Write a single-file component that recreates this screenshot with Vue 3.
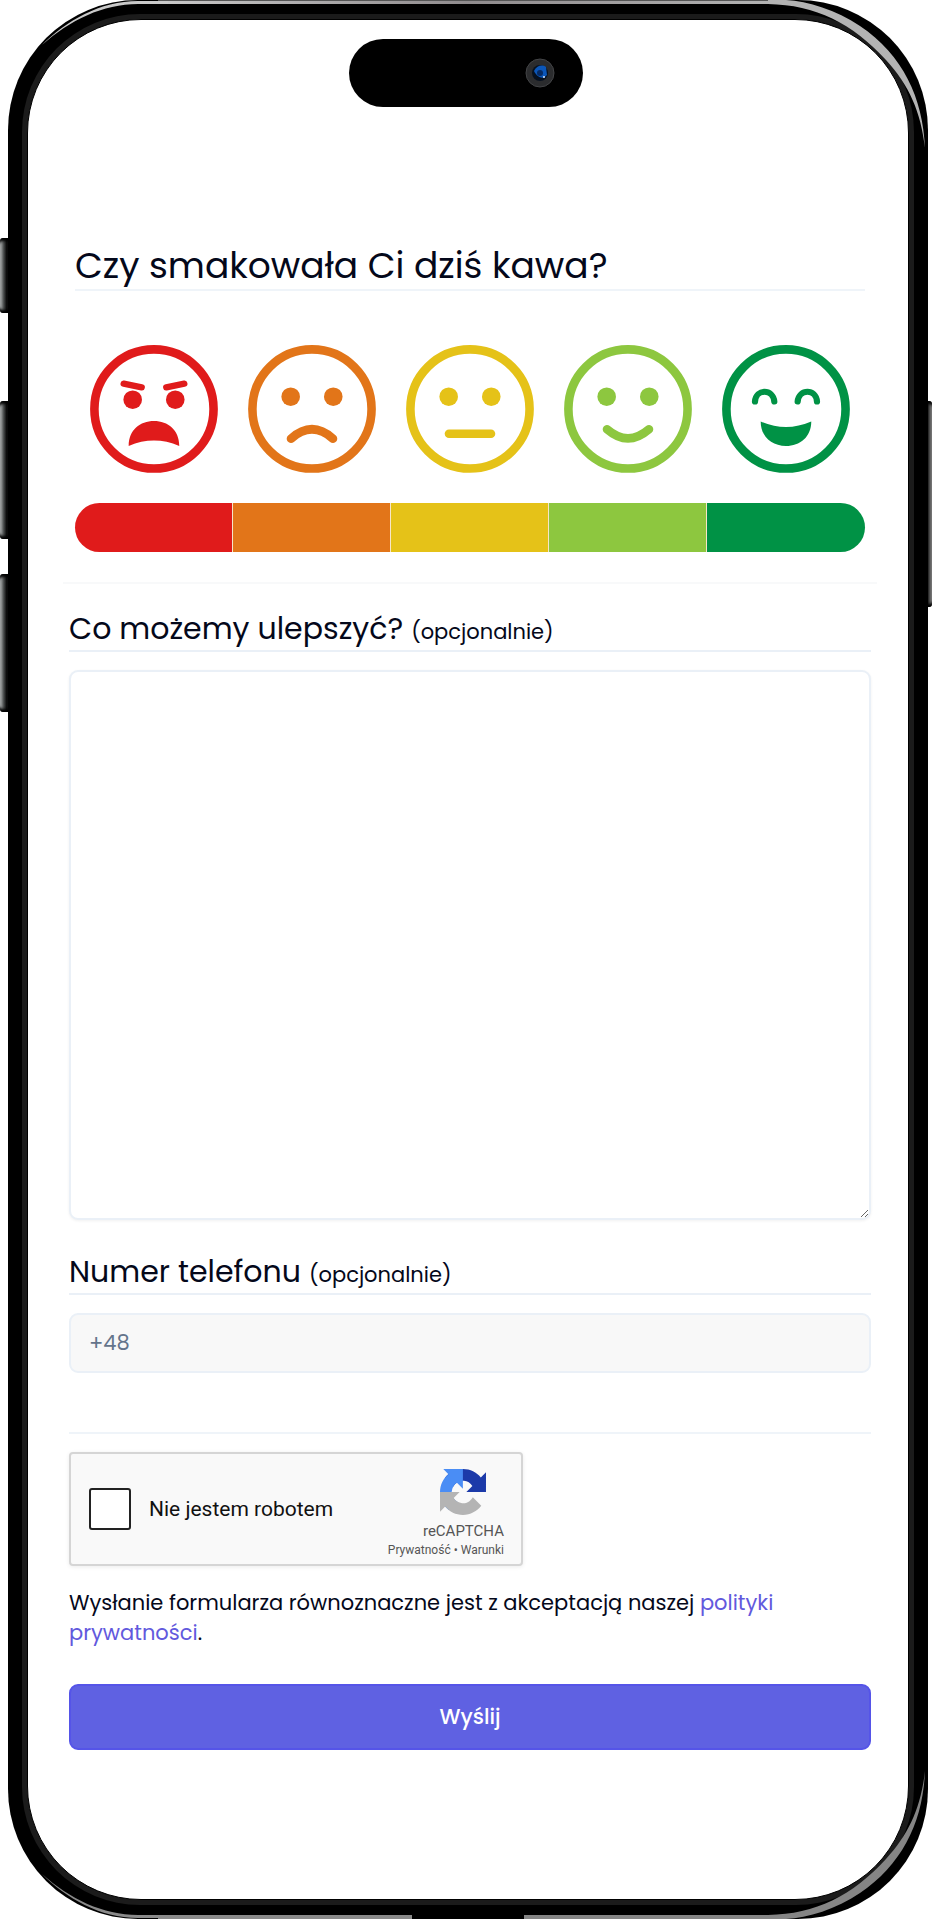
<script setup>
import { ref } from 'vue'

const rating = ref('')
const comment = ref('')
const phone = ref('')
const notRobot = ref(false)

const levels = [
  { id: 'terrible', label: 'Bardzo źle' },
  { id: 'bad', label: 'Źle' },
  { id: 'neutral', label: 'Średnio' },
  { id: 'good', label: 'Dobrze' },
  { id: 'great', label: 'Bardzo dobrze' },
]

const submit = () => {
  if (!notRobot.value) return
  comment.value = ''
  phone.value = ''
  rating.value = ''
}
</script>

<template>
  <div class="phone">
    <!-- przyciski boczne -->
    <span class="side-key side-key--action"></span>
    <span class="side-key side-key--up"></span>
    <span class="side-key side-key--down"></span>
    <span class="side-key side-key--power"></span>

    <!-- refleksy na obudowie -->
    <span class="edge edge--top"></span>
    <span class="edge edge--bottom"></span>
    <svg class="glare glare--tl" viewBox="0 0 160 160" width="160" height="160" aria-hidden="true">
      <path d="M34 45C58 21 92 1 130 1H160V4H130C95 4 62 20 34 45Z" fill="#c9c9c9" />
    </svg>
    <svg class="glare glare--tr" viewBox="0 0 160 160" width="160" height="160" aria-hidden="true">
      <path d="M0 0H18C40 1 68 10 92 26C135 55 155 98 157 148C153 112 141 85 118 60C84 23 48 5 0 4Z" fill="#b3b3b3" />
    </svg>
    <svg class="glare glare--bl" viewBox="0 0 160 160" width="160" height="160" aria-hidden="true">
      <path d="M34 115C58 139 92 159 130 159H160V156H130C95 156 62 140 34 115Z" fill="#8a8a8a" />
    </svg>
    <svg class="glare glare--br" viewBox="0 0 160 160" width="160" height="160" aria-hidden="true">
      <path d="M0 160H18C40 159 68 150 92 134C135 105 155 62 157 12C153 48 141 75 118 100C84 137 48 155 0 156Z" fill="#858585" />
    </svg>

    <div class="bezel">
      <main class="screen">
        <div class="island">
          <svg width="30" height="30" viewBox="0 0 30 30" aria-hidden="true">
            <circle cx="15" cy="15" r="14" fill="#2b2c2e" stroke="#434446" />
            <circle cx="15" cy="15" r="8" fill="#07111f" />
            <path d="M9 13C11 8 17 6 21 9L22 17C19 21 13 21 9 13Z" fill="#0b56b8" />
            <circle cx="15" cy="15" r="3" fill="#062a63" />
            <circle cx="19" cy="19" r="1" fill="#dceaff" />
          </svg>
        </div>

        <form class="form" @submit.prevent="submit">
          <fieldset class="rating">
            <legend class="rating__title">Czy smakowała Ci dziś kawa?</legend>
            <div class="rating__options">
              <label v-for="l in levels" :key="l.id" class="option" :class="`option--${l.id}`">
                <input v-model="rating" class="option__input" type="radio" name="rating" :value="l.id" :aria-label="l.label" />
                <svg class="option__face" viewBox="0 0 128 128" fill="none" stroke="currentColor" stroke-linecap="round" aria-hidden="true">
                  <circle cx="64" cy="64" r="59.6" stroke-width="8.6" />
                  <g v-if="l.id !== 'great'" fill="currentColor" stroke="none">
                    <circle cx="42.7" :cy="l.id === 'terrible' ? 54.7 : 51.7" r="9.3" />
                    <circle cx="85.3" :cy="l.id === 'terrible' ? 54.7 : 51.7" r="9.3" />
                  </g>
                  <template v-if="l.id === 'terrible'">
                    <path d="M33.7 38.7L51.7 42.3M94.3 38.7L76.3 42.3" stroke-width="6.4" />
                    <path d="M38.7 101C38.7 85 50 76 64 76S89.3 85 89.3 101Q64 90 38.7 101Z" fill="currentColor" stroke="none" />
                  </template>
                  <path v-else-if="l.id === 'bad'" d="M43 93.7Q64 75 85 93.7" stroke-width="8.6" />
                  <path v-else-if="l.id === 'neutral'" d="M43 88.7H85" stroke-width="8.6" />
                  <path v-else-if="l.id === 'good'" d="M43 84.3Q64 102.5 85 84.3" stroke-width="8.6" />
                  <template v-else>
                    <path d="M33 56.5C34 43.5 51 43.5 52.3 56.5M75.7 56.5C77 43.5 94 43.5 95 56.5" stroke-width="6.2" />
                    <path d="M38.7 76.5Q64 87.5 89.3 76.5C89.3 92 78 101 64 101S38.7 92 38.7 76.5Z" fill="currentColor" stroke="none" />
                  </template>
                </svg>
                <span class="option__bar"></span>
              </label>
            </div>
          </fieldset>

          <hr class="divider divider--wide" />

          <label class="label" for="comment">Co możemy ulepszyć? <small>(opcjonalnie)</small></label>
          <textarea id="comment" v-model="comment" class="field field--area"></textarea>

          <label class="label label--phone" for="phone">Numer telefonu <small>(opcjonalnie)</small></label>
          <input id="phone" v-model="phone" class="field field--phone" type="tel" placeholder="+48" />

          <hr class="divider" />

          <div class="captcha">
            <input id="robot" v-model="notRobot" class="captcha__box" type="checkbox" />
            <label class="captcha__label" for="robot">Nie jestem robotem</label>
            <div class="captcha__brand">
              <svg width="46" height="46" viewBox="0 0 64 64" aria-hidden="true">
                <path fill="#1c3aa9" d="M64 31.955l-.033-1.37V4.687l-7.16 7.16C50.948 4.674 42.033.093 32.05.093c-10.4 0-19.622 4.96-25.458 12.64l11.736 11.86a15.55 15.55 0 0 1 4.754-5.334c2.05-1.6 4.952-2.906 8.968-2.906.485 0 .86.057 1.135.163 4.976.393 9.288 3.14 11.828 7.124l-8.307 8.307L64 31.953" />
                <path fill="#4a8df5" d="M31.862.094l-1.37.033H4.594l7.16 7.16C4.58 13.147 0 22.06 0 32.046c0 10.4 4.96 19.622 12.64 25.458L24.5 45.768a15.55 15.55 0 0 1-5.334-4.754c-1.6-2.05-2.906-4.952-2.906-8.968 0-.485.057-.86.163-1.135.393-4.976 3.14-9.288 7.124-11.828l8.307 8.307L31.86.095" />
                <path fill="#b4b4b4" d="M.001 32.045l.033 1.37v25.898l7.16-7.16c5.86 7.173 14.774 11.754 24.76 11.754 10.4 0 19.622-4.96 25.458-12.64l-11.736-11.86a15.55 15.55 0 0 1-4.754 5.334c-2.05 1.6-4.952 2.906-8.968 2.906-.485 0-.86-.057-1.135-.163-4.976-.393-9.288-3.14-11.828-7.124l8.307-8.307c-10.522.04-22.4.066-27.295-.005" />
              </svg>
              <span class="captcha__name">reCAPTCHA</span>
              <span class="captcha__links"><a href="#">Prywatność</a> • <a href="#">Warunki</a></span>
            </div>
          </div>

          <p class="consent">
            Wysłanie formularza równoznaczne jest z akceptacją naszej
            <a href="#">polityki prywatności</a>.
          </p>

          <button class="submit" type="submit">Wyślij</button>
        </form>
      </main>
    </div>
  </div>
</template>

<style>
body {
  background: #fff;
}
</style>

<style scoped>
.phone {
  position: relative;
  margin: 0 4px 0 8px;
  padding: 14px;
  border-radius: 130px;
  background: #000;
  font-family: Poppins, Inter, "Open Sans", sans-serif;
  color: #04081a;
}

.bezel {
  padding: 5px;
  border-radius: 118px;
  background: #1b1b1b;
}

.screen {
  display: flow-root;
  padding-right: 4px;
  border: 1px solid #000;
  border-radius: 114px;
  background: #fff;
}

.side-key {
  position: absolute;
  left: -8px;
  width: 8px;
  height: 138px;
  border-radius: 3px 0 0 3px;
  background: linear-gradient(to right, #b5b8b8, #4b4e4e 45%, #0c0c0c 80%);
  box-shadow: inset 0 5px 3px -2px #000, inset 0 -5px 3px -2px #000;
}

.side-key--action { top: 238px; height: 75px; }
.side-key--up { top: 401px; }
.side-key--down { top: 574px; }

.side-key--power {
  top: 401px;
  right: -4px;
  left: auto;
  width: 4px;
  height: 206px;
  border-radius: 0 3px 3px 0;
  background: linear-gradient(to right, #222, #8a8a8a);
}

.edge {
  position: absolute;
  right: 150px;
  left: 150px;
  height: 4px;
}

.edge--top {
  top: 0;
  border-top: 1px solid #555;
  box-sizing: border-box;
  background: linear-gradient(to right, #c9c9c9, #8f8b8d 50%, #b3b3b3);
}

.edge--bottom {
  bottom: 0;
  background: linear-gradient(to right, #8a8a8a 0 41%, #000 41% 59%, #858585 59%);
}

.glare { position: absolute; }
.glare--tl { top: 0; left: 0; }
.glare--tr { top: 0; right: 0; }
.glare--bl { bottom: 0; left: 0; }
.glare--br { right: 0; bottom: 0; }

.island {
  display: flex;
  align-items: center;
  justify-content: flex-end;
  box-sizing: border-box;
  width: 234px;
  height: 68px;
  margin: 19px auto 0;
  padding-right: 28px;
  border-radius: 34px;
  background: #000;
}

.form {
  display: flex;
  flex-direction: column;
  padding: 135px 33px 149px 41px;
}

.rating {
  min-width: 0;
  margin: 0 6px;
  padding: 0;
  border: 0;
}

.rating__title {
  box-sizing: border-box;
  width: 100%;
  padding: 0;
  border-bottom: 2px solid #eff4f9;
  font-size: 36px;
  line-height: 47px;
}

.rating__options {
  display: grid;
  grid-template-columns: repeat(5, 1fr);
  padding-top: 54px;
}

.option {
  display: flex;
  flex-direction: column;
  align-items: center;
  gap: 30px;
  cursor: pointer;
}

.option__input {
  position: absolute;
  opacity: 0;
}

.option__face {
  width: 81%;
  height: auto;
}

.option__input:focus-visible + .option__face {
  outline: 2px solid currentColor;
  outline-offset: 4px;
  border-radius: 50%;
}

.option__bar {
  align-self: stretch;
  box-sizing: border-box;
  height: 49px;
  border-right: 1px solid #f7e6c8;
  background: currentColor;
}

.option:first-child .option__bar { border-radius: 25px 0 0 25px; }
.option:last-child .option__bar { border-right: 0; border-radius: 0 25px 25px 0; }

.option--terrible { color: #e01b1b; }
.option--bad { color: #e27519; }
.option--neutral { color: #e5c218; }
.option--good { color: #8dc73f; }
.option--great { color: #009245; }

.divider {
  width: 100%;
  height: 2px;
  margin: 59px 0 18px;
  border: 0;
  background: #eff4f9;
}

.divider--wide {
  width: auto;
  margin: 30px -6px 25px;
  background: #f8f9fa;
}

.label {
  padding-bottom: 1px;
  border-bottom: 2px solid #eaf0f7;
  font-size: 30px;
  line-height: 40px;
}

.label small {
  font-size: 21px;
  line-height: 1;
}

.label--phone { margin-top: 32px; }

.field {
  box-sizing: border-box;
  width: 100%;
  margin: 18px 0 0;
  padding: 12px 18px;
  border: 2px solid #eaf0f7;
  border-radius: 9px;
  background: #fff;
  color: inherit;
  font: inherit;
  font-size: 21px;
  box-shadow: 0 1px 3px rgba(0, 0, 0, 0.06);
}

.field:focus {
  outline: none;
  border-color: #5f61e2;
}

.field::placeholder { color: #64748b; opacity: 1; }

.field--area {
  height: 550px;
  resize: vertical;
}

.field--phone {
  height: 60px;
  background: #f8f8f8;
  box-shadow: none;
}

.captcha {
  display: flex;
  align-items: center;
  box-sizing: border-box;
  width: 454px;
  max-width: 100%;
  height: 114px;
  padding: 0 17px 0 18px;
  border: 2px solid #d5d5d5;
  border-radius: 4px;
  background: #f9f9f9;
  box-shadow: 0 1px 4px rgba(0, 0, 0, 0.08);
  font-family: Roboto, sans-serif;
}

.captcha__box {
  appearance: none;
  flex: none;
  box-sizing: border-box;
  width: 42px;
  height: 42px;
  margin: 0;
  border: 2px solid #222;
  border-radius: 3px;
  background: #fff;
}

.captcha__box:checked { background: #4a8df5; }

.captcha__label {
  flex: 1;
  padding-left: 18px;
  color: #111;
  font-size: 21px;
}

.captcha__brand {
  display: flex;
  flex-direction: column;
  align-items: flex-end;
  padding-top: 10px;
  color: #555;
}

.captcha__brand svg { margin-right: 18px; }

.captcha__name {
  margin-top: 5px;
  font-size: 15px;
  line-height: 22px;
}

.captcha__links { font-size: 12px; line-height: 16px; }

.captcha__links a {
  color: inherit;
  text-decoration: none;
}

.consent {
  margin: 22px 0 36px;
  font-size: 21px;
  line-height: 30px;
}

.consent a {
  color: #6259dd;
  text-decoration: none;
}

.submit {
  height: 66px;
  border: 2px solid #5554e8;
  border-radius: 9px;
  background: #5f61e2;
  color: #fff;
  font: inherit;
  font-size: 21px;
  font-weight: 500;
  cursor: pointer;
}
</style>
